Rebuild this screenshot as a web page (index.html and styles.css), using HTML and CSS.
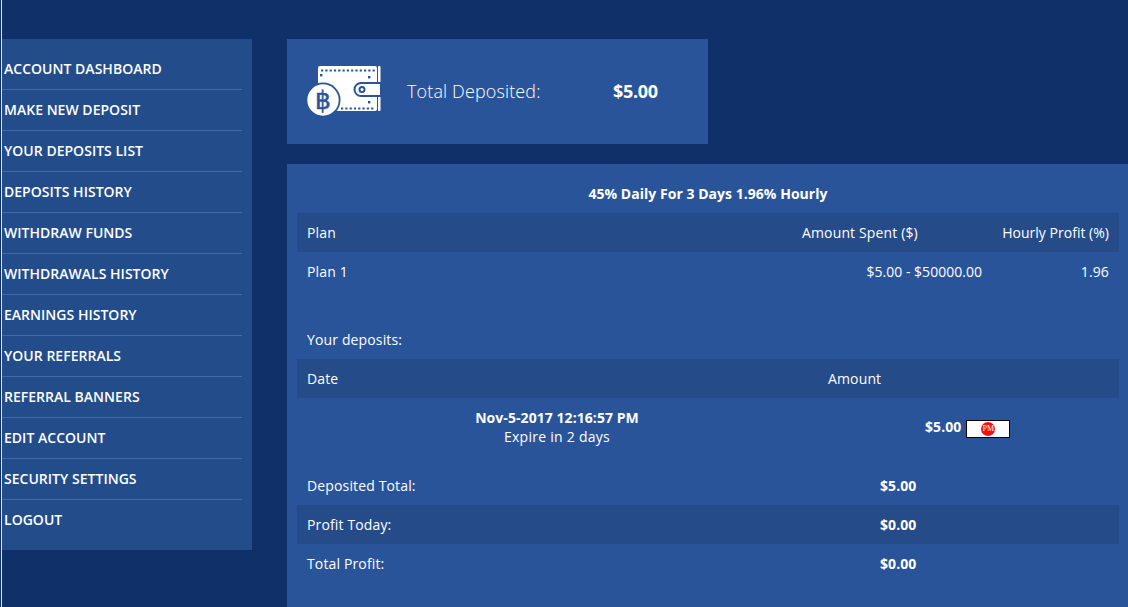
FILE: index.html
```html
<!DOCTYPE html>
<html lang="en">
<head>
<meta charset="utf-8">
<title>Account</title>
<link rel="stylesheet" href="styles.css">
</head>
<body>
<div class="page">
  <nav class="sidebar">
    <a class="nav-item" href="#">ACCOUNT DASHBOARD</a>
    <a class="nav-item" href="#">MAKE NEW DEPOSIT</a>
    <a class="nav-item" href="#">YOUR DEPOSITS LIST</a>
    <a class="nav-item" href="#">DEPOSITS HISTORY</a>
    <a class="nav-item" href="#">WITHDRAW FUNDS</a>
    <a class="nav-item" href="#">WITHDRAWALS HISTORY</a>
    <a class="nav-item" href="#">EARNINGS HISTORY</a>
    <a class="nav-item" href="#">YOUR REFERRALS</a>
    <a class="nav-item" href="#">REFERRAL BANNERS</a>
    <a class="nav-item" href="#">EDIT ACCOUNT</a>
    <a class="nav-item" href="#">SECURITY SETTINGS</a>
    <a class="nav-item last" href="#">LOGOUT</a>
  </nav>
  <main class="content">
    <section class="summary">
      <svg class="wallet" width="76" height="54" viewBox="0 0 76 54" aria-hidden="true">
        <rect x="13" y="1" width="59" height="45" rx="2" fill="#fff"/>
        <rect x="73" y="1" width="2.5" height="45" rx="1" fill="#fff"/>
        <line x1="16" y1="5.5" x2="70" y2="5.5" stroke="#2a5499" stroke-width="2.2" stroke-dasharray="2.2 2.1"/>
        <line x1="36" y1="43.5" x2="70" y2="43.5" stroke="#2a5499" stroke-width="2.2" stroke-dasharray="2.2 2.1"/>
        <rect x="15" y="9" width="2.4" height="2.4" fill="#2a5499"/>
        <rect x="63" y="11" width="2.4" height="2.4" fill="#2a5499"/>
        <rect x="63" y="36" width="2.4" height="2.4" fill="#2a5499"/>
        <path d="M76 18 H56 a6.5 6.5 0 0 0 0 13 H76 Z" fill="#fff" stroke="#2a5499" stroke-width="2"/>
        <circle cx="57" cy="24.5" r="2.5" fill="#fff" stroke="#2a5499" stroke-width="2"/>
        <circle cx="18" cy="35" r="17.5" fill="#2a5499"/>
        <circle cx="18" cy="35" r="15.7" fill="#fff"/>
        <text class="coin" x="18" y="44" text-anchor="middle">฿</text>
      </svg>
      <span class="summary-label">Total Deposited:</span>
      <span class="summary-value">$5.00</span>
    </section>
    <section class="panel">
      <h2 class="plan-title">45% Daily For 3 Days 1.96% Hourly</h2>
      <div class="row plan-row band">
        <span>Plan</span><span>Amount Spent ($)</span><span class="right tight">Hourly Profit (%)</span>
      </div>
      <div class="row plan-row">
        <span>Plan 1</span><span class="right tight">$5.00 - $50000.00</span><span class="right">1.96</span>
      </div>
      <p class="deposits-title">Your deposits:</p>
      <div class="row band deposit-head">
        <span>Date</span><span>Amount</span>
      </div>
      <div class="deposit">
        <div class="deposit-date"><strong>Nov-5-2017 12:16:57 PM</strong><span class="wide">Expire in 2 days</span></div>
        <strong class="deposit-amount">$5.00</strong>
        <span class="pm-badge"><span class="pm-dot">PM</span></span>
      </div>
      <div class="row total-row"><span>Deposited Total:</span><strong>$5.00</strong></div>
      <div class="row total-row band"><span>Profit Today:</span><strong>$0.00</strong></div>
      <div class="row total-row"><span>Total Profit:</span><strong>$0.00</strong></div>
    </section>
  </main>
</div>
</body>
</html>
```
FILE: styles.css
```css
* { box-sizing: border-box; }
html, body { margin: 0; height: 100%; }
body {
  background: #0f3068;
  color: #fff;
  font-family: "Open Sans", "Liberation Sans", sans-serif;
  font-size: 14px;
  line-height: 19px;
  letter-spacing: .14px;
  overflow: hidden;
}
strong { letter-spacing: .06px; }
.tight { letter-spacing: .02px; }
.wide { letter-spacing: .26px; }
.page {
  display: flex;
  align-items: flex-start;
  gap: 35px;
  height: 607px;
  padding-top: 39px;
  margin-left: 1px;
  border-left: 1px solid #dfe6f2;
}
.sidebar {
  flex: 0 0 250px;
  height: 511px;
  padding-top: 10px;
  background: #234c8a;
  display: flex;
  flex-direction: column;
}
.nav-item {
  height: 41px;
  width: 240px;
  padding: 10px 0 0 2px;
  color: #fff;
  font-weight: 600;
  letter-spacing: .02px;
  text-decoration: none;
  border-bottom: 1px solid #4269ab;
}
.nav-item.last { border-bottom: 0; }
.content {
  flex: 1;
  display: flex;
  flex-direction: column;
  gap: 20px;
  min-width: 0;
}
.summary {
  width: 421px;
  height: 105px;
  background: #2a5499;
  display: flex;
  align-items: center;
  padding: 0 0 0 18px;
}
.wallet { margin-top: 1px; flex: none; }
.summary-label {
  margin-left: 26px;
  width: 206px;
  font-size: 18px;
  font-weight: 300;
  letter-spacing: .13px;
}
.summary-value { font-size: 18px; font-weight: 700; letter-spacing: -.3px; }
.panel {
  height: 444px;
  background: #2a5499;
  padding: 20px 9px 0 10px;
}
.plan-title {
  margin: 0;
  height: 29px;
  font-size: 14px;
  line-height: 20px;
  font-weight: 700;
  letter-spacing: .03px;
  text-align: center;
}
.row {
  display: grid;
  align-items: center;
  height: 39px;
  padding: 0 10px;
}
.band { background: #254b88; }
.plan-row { grid-template-columns: 495px 180px 127px; }
.right { text-align: right; }
.deposits-title { margin: 39px 0 0 10px; height: 29px; line-height: 19px; }
.deposit-head { grid-template-columns: 521px 1fr; }
.deposit {
  height: 68px;
  display: flex;
  align-items: flex-start;
  padding-top: 10px;
}
.deposit-date {
  width: 520px;
  display: flex;
  flex-direction: column;
  align-items: center;
}
.deposit-amount { margin: 9px 0 0 108px; }
.pm-badge {
  margin: 12px 0 0 5px;
  width: 44px;
  height: 18px;
  background: #fff;
  border: 1px solid #000;
  display: flex;
  justify-content: center;
  align-items: center;
}
.pm-dot {
  width: 14px;
  height: 14px;
  border-radius: 50%;
  background: #ee1111;
  color: #fff;
  font-family: "Liberation Serif", serif;
  font-size: 8px;
  font-weight: 400;
  letter-spacing: 0;
  line-height: 14px;
  text-align: center;
}
.total-row { grid-template-columns: 573px 1fr; }
.coin {
  font-family: "DejaVu Sans", sans-serif;
  font-size: 25px;
  font-weight: 400;
  letter-spacing: 0;
  fill: #2a5499;
  stroke: #2a5499;
  stroke-width: .5px;
}
```
